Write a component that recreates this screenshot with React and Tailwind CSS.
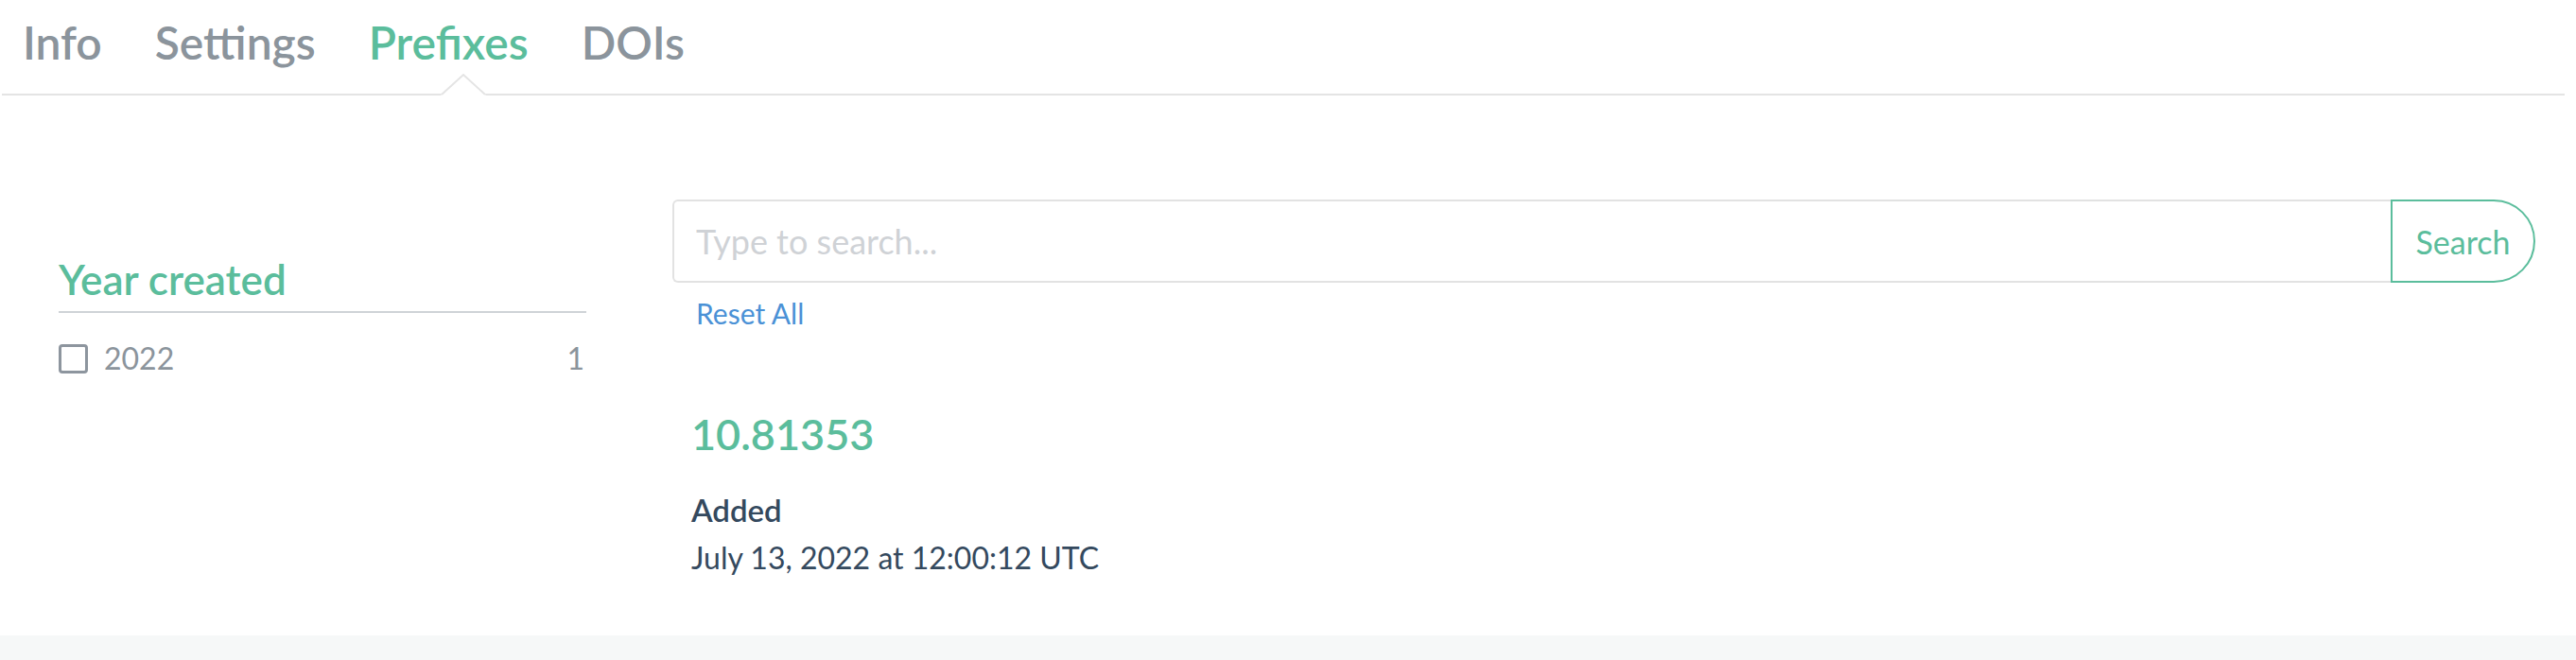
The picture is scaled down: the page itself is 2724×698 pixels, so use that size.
import React from 'react'

const TABS = ['Info', 'Settings', 'Prefixes', 'DOIs']

const App = () => {
  return (
    <div className="w-[2724px] h-[698px] bg-white flex flex-col font-['Lato',sans-serif]">

      {/* ── Tabs ──────────────────────────────────────── */}
      <nav className="relative ml-[2px] mr-[12px] border-b-2 border-[#e4e4e4] pt-[21px] pb-[30px] pl-[22px] flex gap-[56px]">
        {TABS.map((t) => (
          <span
            key={t}
            className={`text-[48px] leading-[48px] font-semibold ${t === 'Prefixes' ? 'text-[#5bbd9c]' : 'text-[#8b949c]'}`}
          >
            {t}
          </span>
        ))}
        <svg className="absolute left-[464px] bottom-[-2px]" width="48" height="24" viewBox="0 0 48 24">
          <polygon points="0,24 24,2 48,24" fill="#fff" />
          <polyline points="1,23 24,2 47,23" fill="none" stroke="#e4e4e4" strokeWidth="2" />
        </svg>
      </nav>

      <div className="flex flex-1">
        {/* ── Facets ──────────────────────────────────── */}
        <aside className="w-[620px] shrink-0 pl-[62px] pt-[172px]">
          <h3 className="text-[44px] leading-[44px] font-semibold text-[#5bbd9c] pb-[12px] border-b-2 border-[#cfd3d7]">
            Year created
          </h3>
          <div className="mt-[32px] flex items-center">
            <span className="w-[31px] h-[31px] border-[3px] border-[#8d959e] rounded-[4px]" />
            <span className="ml-[17px] text-[32px] leading-[32px] text-[#8b949c]">2022</span>
            <span className="ml-auto mr-[2px] text-[32px] leading-[32px] text-[#8b949c]">1</span>
          </div>
        </aside>

        {/* ── Results ─────────────────────────────────── */}
        <main className="ml-[91px] w-[1970px] pt-[110px]">
          <div className="flex h-[88px]">
            <input
              type="text"
              placeholder="Type to search..."
              className="flex-1 h-full border-2 border-r-0 border-[#e2e2e2] rounded-l-[6px] pl-[23px] text-[36px] outline-none placeholder:text-[#cfd2d6] font-['Lato',sans-serif]"
            />
            <button className="w-[153px] h-full border-2 border-[#5bbd9c] rounded-r-[44px] text-[34px] text-[#5bbd9c] font-['Lato',sans-serif]">
              Search
            </button>
          </div>
          <div className="mt-[17px] pl-[25px] text-[30px] leading-[30px] text-[#4a91d6]">Reset All</div>

          <div className="pl-[20px]">
            <h2 className="mt-[91px] text-[45px] leading-[45px] font-semibold text-[#5bbd9c]">10.81353</h2>
            <div className="mt-[41px] text-[33px] leading-[33px] font-semibold text-[#34495e]">Added</div>
            <div className="mt-[18px] text-[32px] leading-[32px] text-[#34495e]">July 13, 2022 at 12:00:12 UTC</div>
          </div>
        </main>
      </div>

      <footer className="h-[26px] bg-[#f6f8f8]" />
    </div>
  )
}

export default App
